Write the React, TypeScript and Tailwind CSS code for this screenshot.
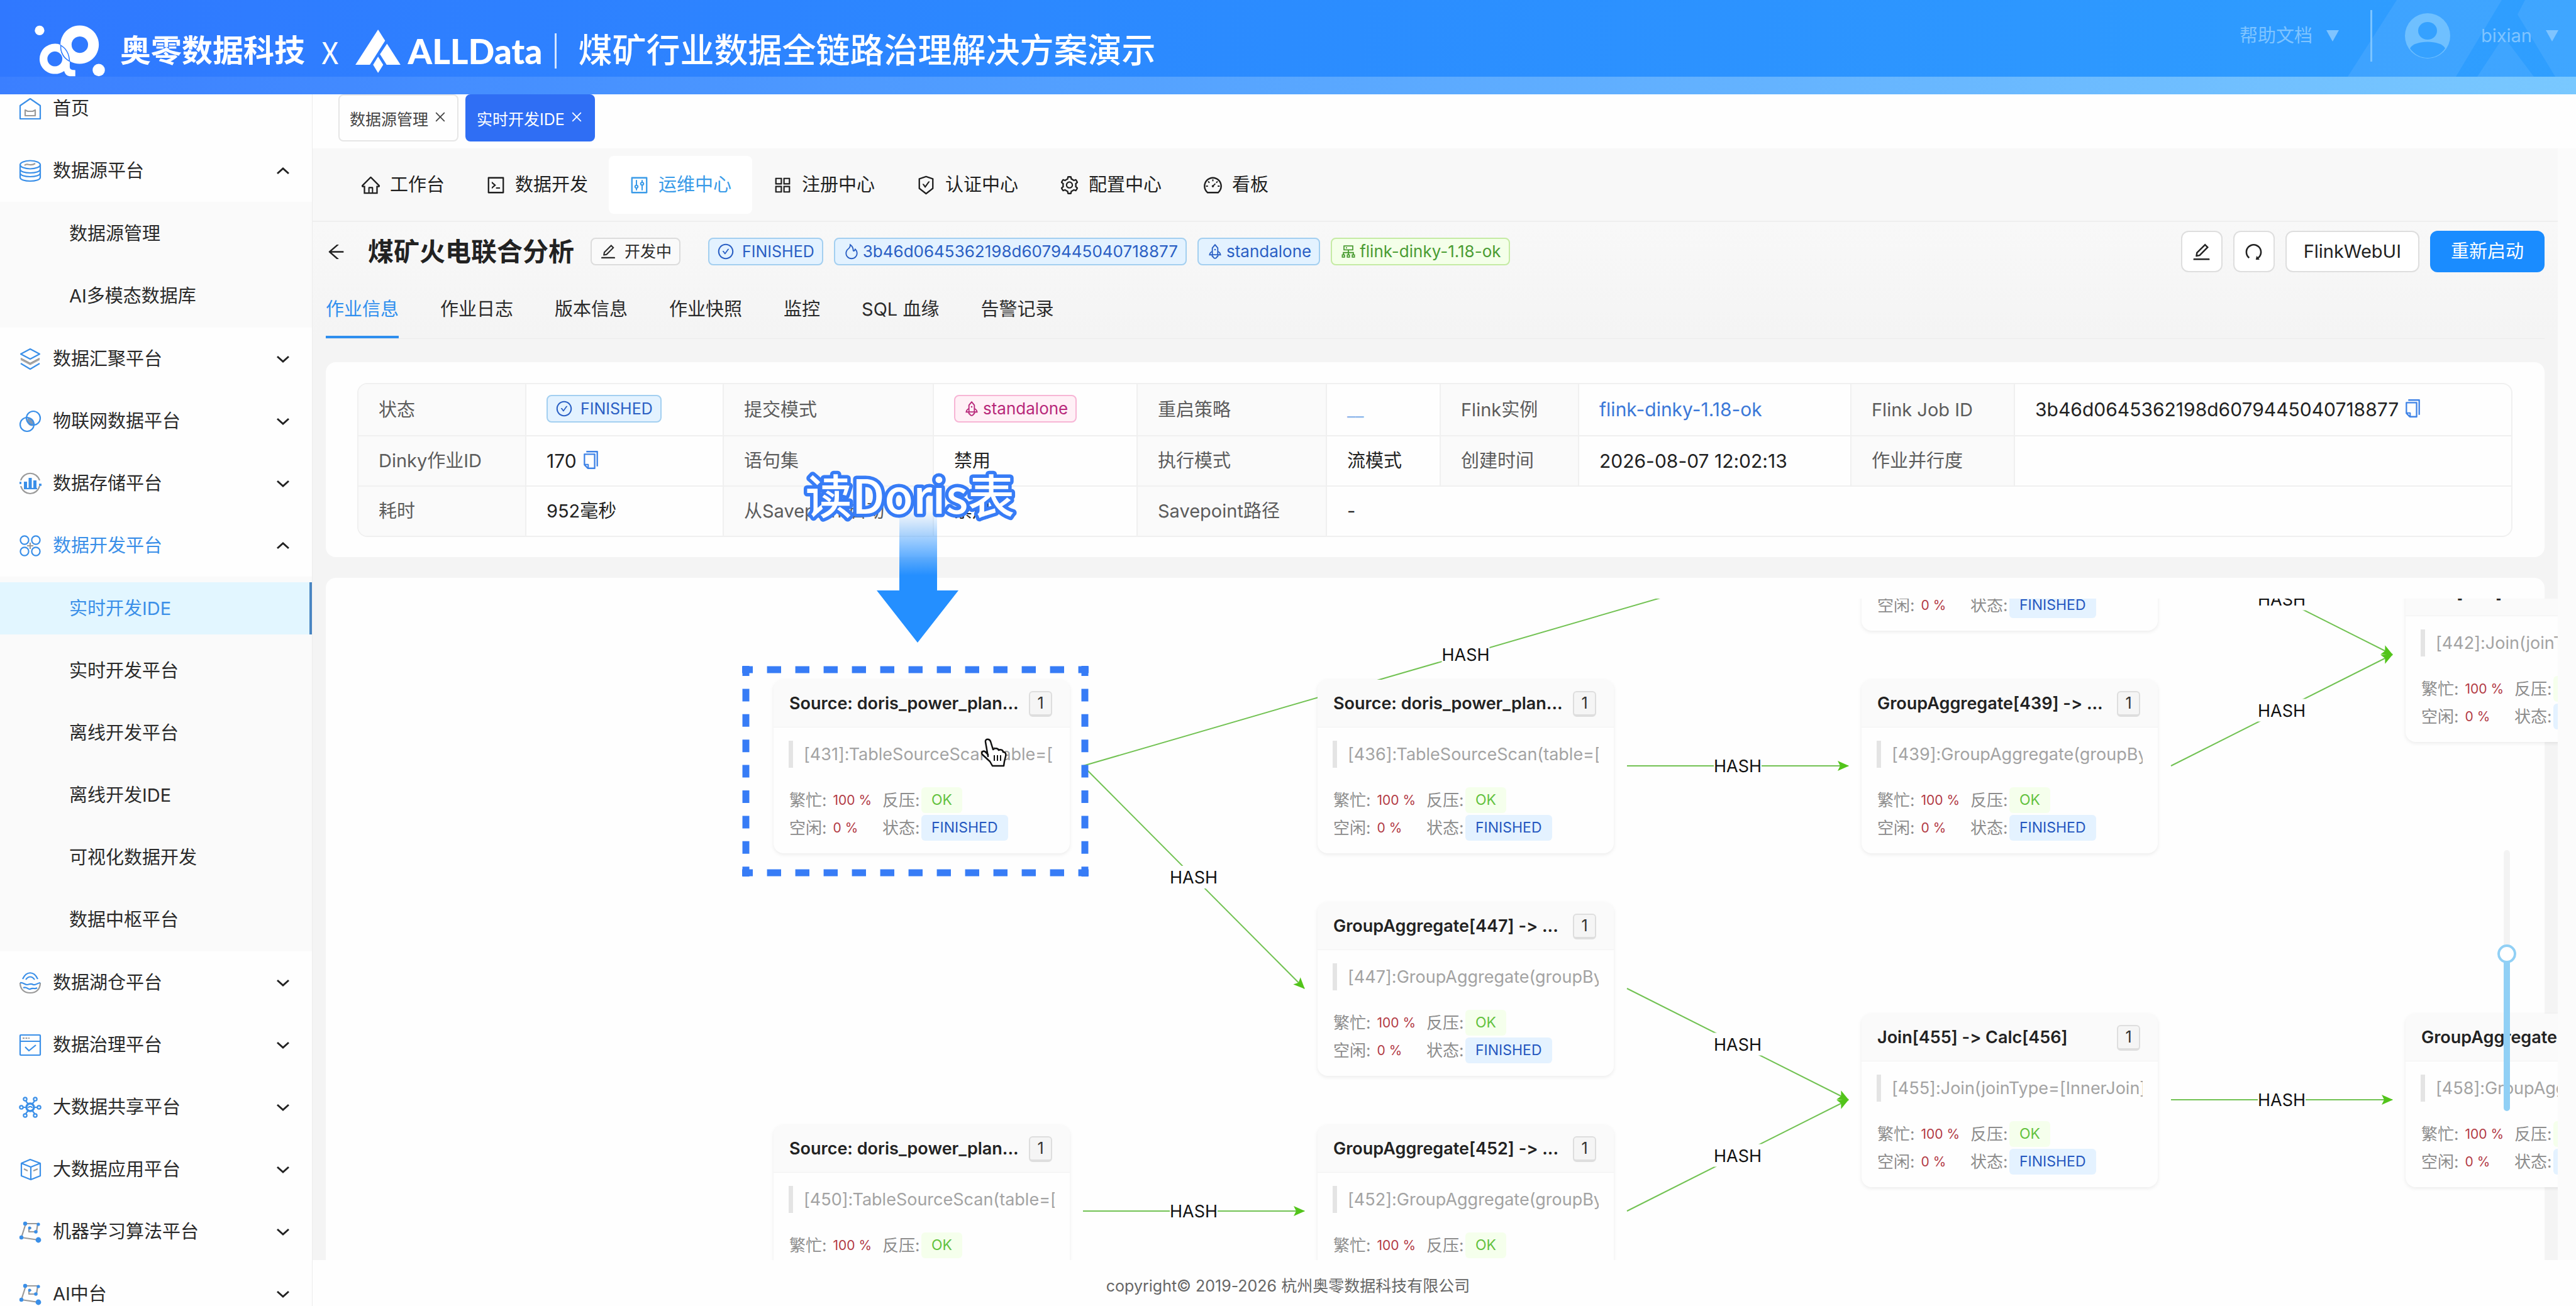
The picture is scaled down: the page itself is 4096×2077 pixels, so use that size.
// App.tsx
import React from 'react';
import {
    AiOutlineAppstore,
    AiOutlineArrowLeft,
    AiOutlineCheckCircle,
    AiOutlineClose,
    AiOutlineCluster,
    AiOutlineCode,
    AiOutlineControl,
    AiOutlineCopy,
    AiOutlineDashboard,
    AiOutlineEdit,
    AiOutlineFire,
    AiOutlineHome,
    AiOutlineRedo,
    AiOutlineRocket,
    AiOutlineSafetyCertificate,
    AiOutlineSetting,
} from 'react-icons/ai';

const BLUE = '#3a8fe8';
const GRAY = '#9a9a9a';

// ---------- sidebar icons ----------

const MenuSvg: React.FC<{ children: React.ReactNode }> = ({ children }) => (
    <svg viewBox="0 0 36 36" className="w-9 h-9 shrink-0" fill="none" stroke={BLUE} strokeWidth="2.2" strokeLinejoin="round">
        {children}
    </svg>
);

const IconHome = () => (
    <MenuSvg>
        <path d="M2 13 L18 2 L34 13 V34 H2 Z" />
        <path d="M10 20 L14 22 H22 L26 20 V29 H10 Z" stroke={GRAY} />
    </MenuSvg>
);
const IconSource = () => (
    <MenuSvg>
        <ellipse cx="18" cy="8" rx="16" ry="6.5" />
        <path d="M2 8 V28 C2 36 34 36 34 28 V8" />
        <path d="M2 15 C2 23 34 23 34 15 M2 21 C2 29 34 29 34 21" />
        <path d="M9 9 C14 4 17 12 26 6" stroke={GRAY} />
    </MenuSvg>
);
const IconLayers = () => (
    <MenuSvg>
        <path d="M18 2 L33 10 L18 18 L3 10 Z" />
        <path d="M3 17 L18 25 L33 17" stroke={GRAY} />
        <path d="M3 19 L18 27 L33 19" stroke={GRAY} strokeWidth="1.2" />
        <path d="M3 25 L18 34 L33 25" />
    </MenuSvg>
);
const IconIot = () => (
    <MenuSvg>
        <path d="M14 13 C20 11 26 17 23 25 C17 27 11 21 14 13 Z" fill="#7d98b8" stroke="none" />
        <circle cx="23" cy="13" r="11" />
        <circle cx="13" cy="23" r="11" />
    </MenuSvg>
);
const IconStorage = () => (
    <MenuSvg>
        <path d="M3 13 C8 -2 28 -2 33 13 M33 22 C28 38 8 38 3 22" stroke={GRAY} />
        <path d="M1 17 H4 M32 20 H36" strokeWidth="3.4" />
        <path d="M8 26 H29" />
        <path d="M8 15 H13 V25 H8 Z M15.500 9 H20.500 V25 H15.500 Z M23 13 H28 V25 H23 Z" fill={BLUE} stroke="none" />
    </MenuSvg>
);
const IconDev = () => (
    <MenuSvg>
        <circle cx="9" cy="9" r="6.600" />
        <circle cx="27" cy="9" r="6.600" />
        <circle cx="9" cy="27" r="6.600" />
        <circle cx="27" cy="27" r="6.600" />
        <path d="M18 13 V23 M13 18 H23" stroke={GRAY} />
    </MenuSvg>
);
const IconLake = () => (
    <MenuSvg>
        <path d="M6 12 C12 -1 24 -1 30 12 M11 13 C15 7 21 7 25 13" />
        <path d="M2 18 C2 28 8 34 18 34 C28 34 34 28 34 18" stroke={GRAY} />
        <path d="M2 18 C7 17 9 21 13 21 C17 21 18 18 23 21 C27 22 30 18 34 18 M7 26 C12 23 14 29 18 28 C23 25 25 29 29 26" />
    </MenuSvg>
);
const IconGovern = () => (
    <MenuSvg>
        <rect x="2" y="2" width="32" height="32" rx="1" />
        <path d="M2 12 H34 M10 21 L16 27 L27 18" />
        <path d="M6 7 H17" stroke={GRAY} strokeDasharray="3 1.5" />
    </MenuSvg>
);
const IconShare = () => (
    <MenuSvg>
        <circle cx="18" cy="18" r="6" strokeWidth="3.400" />
        <circle cx="10" cy="5" r="2.700" />
        <circle cx="26" cy="5" r="2.700" />
        <circle cx="4" cy="18" r="2.700" />
        <circle cx="32" cy="18" r="2.700" />
        <circle cx="10" cy="31" r="2.700" />
        <circle cx="26" cy="31" r="2.700" />
        <path d="M11 8 L15 13 M25 8 L21 13 M7 18 H12 M24 18 H29 M11 28 L15 23 M25 28 L21 23 M15 19 C16 16 20 16 21 19" />
    </MenuSvg>
);
const IconApp = () => (
    <MenuSvg>
        <path d="M18 2 L34 8 V28 L19 34 L4 28 V8 Z M4 8 L19 14 L34 8 M19 14 V34" />
        <path d="M8 17 L14 20 M23 20 L30 17" stroke={GRAY} />
    </MenuSvg>
);
const IconMl = () => (
    <MenuSvg>
        <path d="M4 27 L11 5 H30 L28 18 H16 V12 H20 M4 27 L31 31" stroke={GRAY} />
        <circle cx="10" cy="5" r="3.200" fill={BLUE} stroke="none" />
        <circle cx="31" cy="6" r="2.600" fill={BLUE} stroke="none" />
        <circle cx="27" cy="18" r="2.800" fill={BLUE} stroke="none" />
        <circle cx="17" cy="12" r="2.400" fill={BLUE} stroke="none" />
        <circle cx="4" cy="27" r="3.200" fill={BLUE} stroke="none" />
        <circle cx="31" cy="31" r="4.400" fill={BLUE} stroke="none" />
    </MenuSvg>
);

const Chevron: React.FC<{ open?: boolean }> = ({ open }) => (
    <svg viewBox="0 0 20 12" className="w-5 h-3 ml-auto" fill="none" stroke="#222" strokeWidth="3">
        <path d={open ? 'M1 10 L10 2 L19 10' : 'M1 2 L10 10 L19 2'} />
    </svg>
);

// ---------- sidebar ----------

interface MenuGroup {
    label: string;
    icon: React.FC;
    leaf?: boolean;
    active?: boolean;
    children?: string[];
}

const menu: MenuGroup[] = [
    { label: '首页', icon: IconHome, leaf: true },
    { label: '数据源平台', icon: IconSource, children: ['数据源管理', 'AI多模态数据库'] },
    { label: '数据汇聚平台', icon: IconLayers },
    { label: '物联网数据平台', icon: IconIot },
    { label: '数据存储平台', icon: IconStorage },
    {
        label: '数据开发平台',
        icon: IconDev,
        active: true,
        children: ['实时开发IDE', '实时开发平台', '离线开发平台', '离线开发IDE', '可视化数据开发', '数据中枢平台'],
    },
    { label: '数据湖仓平台', icon: IconLake },
    { label: '数据治理平台', icon: IconGovern },
    { label: '大数据共享平台', icon: IconShare },
    { label: '大数据应用平台', icon: IconApp },
    { label: '机器学习算法平台', icon: IconMl },
    { label: 'AI中台', icon: IconMl },
];

const Sidebar = () => (
    <nav className="w-[497px] shrink-0 border-r border-[#ececec] bg-[#fefefe] overflow-hidden">
        <ul className="-mt-[27px]">
            {menu.map(({ label, icon: Icon, leaf, active, children }) => (
                <li key={label}>
                    <button className="w-full h-[99px] pl-[30px] pr-9 flex items-center text-left">
                        <Icon />
                        <span className={`ml-[18px] ${active ? 'text-[#3a8fe8]' : 'text-[#2a2a2a]'}`}>{label}</span>
                        {!leaf && <Chevron open={!!children} />}
                    </button>
                    {children && (
                        <ul className="py-px bg-[#fafafa]">
                            {children.map((child) => (
                                <li key={child} className="h-[99px] py-2">
                                    <a
                                        href="#"
                                        className={`h-full flex items-center pl-[110px] border-r-4 ${
                                            child === '实时开发IDE'
                                                ? 'bg-[#e2f6ff] text-[#3a8fe8] border-[#4a86c2]'
                                                : 'text-[#2a2a2a] border-transparent'
                                        }`}
                                    >
                                        {child}
                                    </a>
                                </li>
                            ))}
                        </ul>
                    )}
                </li>
            ))}
        </ul>
    </nav>
);

// ---------- header ----------

const Header = () => (
    <header className="relative h-[150px] shrink-0 flex items-center text-white pl-[55px] pt-[12px] bg-gradient-to-r from-[#3078ff] via-[#2b8cff] to-[#2f9fff] overflow-hidden">
        <div className="absolute inset-x-0 bottom-0 h-7 bg-gradient-to-r from-[#3b7fff] via-[#58a6ff] to-[#79c8ff]" />
        <svg viewBox="3733 0 363 122" className="absolute right-0 top-0 w-[363px] h-[122px]" fill="#fff" fillOpacity="0.08">
            <path d="M3811 0 H3978 L3905 122 H3733 Z" />
            <path d="M4015 0 L4003 23 L4063 122 H4096 V0 Z" />
            <path d="M3939 122 L3981 58 L4029 122 Z" />
        </svg>
        <svg viewBox="60 65 370 275" className="relative w-[113px] h-[84px]" fill="#fff">
            <circle cx="86" cy="96" r="25" />
            <circle cx="394" cy="302" r="32" />
            <path fillRule="evenodd" d="M295 70 a100 100 0 1 1 -1 0 Z M295 127 a43 43 0 1 0 1 0 Z" />
            <path
                fillRule="evenodd"
                d="M165 165 C182 165 190 168 197 173 C190 200 205 238 243 256 V286 C244 298 250 302 272 302 V334 H250 C230 334 220 326 214 307 C160 345 86 308 86 244 A79 79 0 0 1 165 165 Z M165 205 a39 39 0 1 0 1 0 Z"
            />
            <path d="M193 172 C220 186 240 212 242 258" fill="none" stroke="#2f7cff" strokeWidth="5" />
            <path d="M197 172 C192 210 212 240 242 256" fill="none" stroke="#2f7cff" strokeWidth="5" />
        </svg>
        <span className="relative ml-[23px] text-[49px] leading-[60px] font-bold">奥零数据科技</span>
        <span className="relative ml-[26px] text-[48px] leading-[60px] font-['Noto_Sans_CJK_SC',sans-serif]">X</span>
        <svg viewBox="233 88 237 228" className="relative ml-[26px] w-[72px] h-[69px]" fill="#fff">
            <path d="M352 88 L389 147 L309 273 H233 Z" />
            <path d="M399 162 L470 273 H397 L362 218 Z" />
            <path d="M352 230 L379 273 L352 316 L326 273 Z" />
        </svg>
        <span className="relative ml-[12px] text-[55px] leading-[60px] font-black font-[Lato,sans-serif]">ALLData</span>
        <span className="relative ml-[20px] w-[3px] h-14 bg-white/80" />
        <h1 className="relative ml-[34px] text-[54px] leading-[60px] font-medium">煤矿行业数据全链路治理解决方案演示</h1>
        <div className="absolute right-[28px] top-0 h-[114px] flex items-center text-[#7fc4ff]">
            <button className="flex items-center gap-[22px]">
                帮助文档
                <svg viewBox="0 0 20 18" className="w-5 h-[18px]" fill="currentColor">
                    <path d="M0 0 H20 L10 18 Z" />
                </svg>
            </button>
            <span className="ml-[50px] w-[3px] h-[82px] bg-[#7cc4ff]" />
            <svg viewBox="0 0 72 72" className="ml-[52px] w-[72px] h-[72px]">
                <circle cx="36" cy="36" r="36" fill="#6fc0ff" />
                <ellipse cx="36" cy="28" rx="15" ry="14" fill="#35a1ff" />
                <path d="M8 56 C14 42 58 42 64 56 C50 76 22 76 8 56 Z" fill="#35a1ff" />
            </svg>
            <button className="ml-[49px] flex items-center gap-[22px]">
                bixian
                <svg viewBox="0 0 20 18" className="w-5 h-[18px]" fill="currentColor">
                    <path d="M0 0 H20 L10 18 Z" />
                </svg>
            </button>
        </div>
    </header>
);

// ---------- top of the work area ----------

const WindowTabs = () => (
    <div className="h-[86px] shrink-0 bg-[#fefefe] pl-[41px] flex items-start gap-[11px] text-[25px]">
        <button className="h-[75px] pt-1 px-4 flex items-center gap-2 rounded-lg border-2 border-[#e6e6e6] text-[#444]">
            数据源管理
            <AiOutlineClose className="w-[22px] h-[22px] mb-2" />
        </button>
        <button className="h-[75px] pt-1 px-[18px] flex items-center gap-2 rounded-lg bg-[#2f6ef4] text-white">
            实时开发IDE
            <AiOutlineClose className="w-[22px] h-[22px] mb-2" />
        </button>
    </div>
);

const navItems = [
    { label: '工作台', icon: AiOutlineHome },
    { label: '数据开发', icon: AiOutlineCode },
    { label: '运维中心', icon: AiOutlineControl },
    { label: '注册中心', icon: AiOutlineAppstore },
    { label: '认证中心', icon: AiOutlineSafetyCertificate },
    { label: '配置中心', icon: AiOutlineSetting },
    { label: '看板', icon: AiOutlineDashboard },
];

const TopNav = () => (
    <nav className="h-[117px] pt-3 pl-[44px] flex border-b-2 border-[#efefef]">
        {navItems.map(({ label, icon: Icon }) => (
            <button
                key={label}
                className={`h-[92px] pl-8 pr-[33px] flex items-center gap-[14px] rounded-lg ${
                    label === '运维中心' ? 'bg-white text-[#3a9be8]' : 'text-[#1f1f1f]'
                }`}
            >
                <Icon className="w-[33px] h-[33px]" />
                {label}
            </button>
        ))}
    </nav>
);

const tagColors = {
    plain: 'bg-[#fafafa] border-[#dcdcdc] text-[#2a2a2a]',
    blue: 'bg-[#e3f2ff] border-[#a3cff0] text-[#2a5fc4]',
    green: 'bg-[#f4ffe9] border-[#c5eba4] text-[#4a9c33]',
    pink: 'bg-[#fff0f6] border-[#f7b5d5] text-[#b8287a]',
};

interface TagProps {
    color: keyof typeof tagColors;
    icon: React.ElementType;
    wide?: boolean;
    children: React.ReactNode;
}

const Tag: React.FC<TagProps> = ({ color, icon: Icon, wide, children }) => (
    <span
        className={`inline-flex items-center h-11 px-3 border-2 rounded-lg leading-[40px] whitespace-nowrap ${
            wide ? 'gap-3 text-[25px]' : 'gap-1 text-[26px]'
        } ${tagColors[color]}`}
    >
        <Icon className="w-7 h-7" />
        {children}
    </span>
);

const TitleBar = () => (
    <div className="h-[93px] pt-px flex items-center">
        <button aria-label="返回">
            <AiOutlineArrowLeft className="w-[33px] h-[33px]" />
        </button>
        <h2 className="ml-[34px] mr-[26px] text-[41px] leading-[60px] font-bold text-[#222]">煤矿火电联合分析</h2>
        <Tag color="plain" icon={AiOutlineEdit} wide>开发中</Tag>
        <div className="ml-[44px] flex gap-[17px]">
            <Tag color="blue" icon={AiOutlineCheckCircle} wide>FINISHED</Tag>
            <Tag color="blue" icon={AiOutlineFire}>3b46d0645362198d6079445040718877</Tag>
            <Tag color="blue" icon={AiOutlineRocket}>standalone</Tag>
            <Tag color="green" icon={AiOutlineCluster}>flink-dinky-1.18-ok</Tag>
        </div>
        <div className="ml-auto flex gap-[17px] text-[#222]">
            <button aria-label="编辑" className="w-[66px] h-[66px] grid place-items-center rounded-xl border-2 border-[#dedede] bg-white">
                <AiOutlineEdit className="w-[33px] h-[33px]" />
            </button>
            <button aria-label="刷新" className="w-[66px] h-[66px] grid place-items-center rounded-xl border-2 border-[#dedede] bg-white">
                <AiOutlineRedo className="w-[33px] h-[33px]" />
            </button>
            <button className="h-[66px] px-[27px] rounded-xl border-2 border-[#dedede] bg-white">FlinkWebUI</button>
            <button className="h-[66px] px-[33px] rounded-xl bg-[#1a8cff] text-white">重新启动</button>
        </div>
    </div>
);

const detailTabs = ['作业信息', '作业日志', '版本信息', '作业快照', '监控', 'SQL 血缘', '告警记录'];

const DetailTabs = () => (
    <div role="tablist" className="h-[93px] flex gap-[66px] border-b border-[#ebebeb]">
        {detailTabs.map((tab, i) => (
            <button
                key={tab}
                role="tab"
                className={`pt-1 border-b-4 ${i === 0 ? 'text-[#2f8fee] border-[#2f8fee]' : 'text-[#2a2a2a] border-transparent'}`}
            >
                {tab}
            </button>
        ))}
    </div>
);

// ---------- job description table ----------

const Label: React.FC<{ children: React.ReactNode }> = ({ children }) => (
    <th scope="row" className="px-8 text-left font-normal text-[#5c5c5c] bg-[#fafafa] border-r-2 border-[#f0f0f0] whitespace-nowrap">
        {children}
    </th>
);

const Value: React.FC<{ span?: number; last?: boolean; children?: React.ReactNode }> = ({ span, last, children }) => (
    <td colSpan={span} className={`px-8 text-[#222] border-[#f0f0f0] whitespace-nowrap ${last ? '' : 'border-r-2'}`}>
        {children}
    </td>
);

const CopyButton = () => (
    <button aria-label="复制" className="ml-1.5 align-[-4px] text-[#3f83e6]">
        <AiOutlineCopy className="w-[33px] h-[33px]" />
    </button>
);

const JobInfo = () => (
    <section className="mt-[37px] pl-[50px] pr-[51px] pt-[33px] pb-8 rounded-2xl bg-[#fefefe]">
        <div className="rounded-2xl border-2 border-[#f0f0f0] overflow-hidden">
            <table className="w-full table-fixed">
                <colgroup>
                    <col className="w-[266px]" />
                    <col className="w-[314px]" />
                    <col className="w-[334px]" />
                    <col className="w-[324px]" />
                    <col className="w-[301px]" />
                    <col className="w-[181px]" />
                    <col className="w-[220px]" />
                    <col className="w-[433px]" />
                    <col className="w-[260px]" />
                    <col />
                </colgroup>
                <tbody>
                    <tr className="h-[82px] border-b-2 border-[#f0f0f0]">
                        <Label>状态</Label>
                        <Value><Tag color="blue" icon={AiOutlineCheckCircle} wide>FINISHED</Tag></Value>
                        <Label>提交模式</Label>
                        <Value><Tag color="pink" icon={AiOutlineRocket}>standalone</Tag></Value>
                        <Label>重启策略</Label>
                        <Value><a href="#" className="text-[#8ab4ea]">__</a></Value>
                        <Label>Flink实例</Label>
                        <Value><a href="#" className="text-[30px] text-[#3b78d8]">flink-dinky-1.18-ok</a></Value>
                        <Label>Flink Job ID</Label>
                        <Value last><span className="text-[30px]">3b46d0645362198d6079445040718877</span><CopyButton /></Value>
                    </tr>
                    <tr className="h-20 border-b-2 border-[#f0f0f0]">
                        <Label>Dinky作业ID</Label>
                        <Value><span className="text-[30px]">170</span><CopyButton /></Value>
                        <Label>语句集</Label>
                        <Value>禁用</Value>
                        <Label>执行模式</Label>
                        <Value>流模式</Value>
                        <Label>创建时间</Label>
                        <Value><span className="text-[30px]">2026-08-07 12:02:13</span></Value>
                        <Label>作业并行度</Label>
                        <Value last />
                    </tr>
                    <tr className="h-[79px]">
                        <Label>耗时</Label>
                        <Value>952毫秒</Value>
                        <Label>从Savepoint启动</Label>
                        <Value>禁用</Value>
                        <Label>Savepoint路径</Label>
                        <Value span={5} last>-</Value>
                    </tr>
                </tbody>
            </table>
        </div>
    </section>
);

// ---------- job graph ----------

const NODE_W = 471;
const PORT_Y = 137;
const PORT_GAP = 21;

interface GraphNode {
    id: string;
    x: number;
    y: number;
    title: string;
    detail: string;
}

const nodes: GraphNode[] = [
    { id: '431', x: 712, y: 129, title: 'Source: doris_power_plan...', detail: '[431]:TableSourceScan(table=[' },
    { id: '450', x: 712, y: 837, title: 'Source: doris_power_plan...', detail: '[450]:TableSourceScan(table=[' },
    { id: '436', x: 1577, y: 129, title: 'Source: doris_power_plan...', detail: '[436]:TableSourceScan(table=[' },
    { id: '447', x: 1577, y: 483, title: 'GroupAggregate[447] -> ...', detail: '[447]:GroupAggregate(groupBy' },
    { id: '452', x: 1577, y: 837, title: 'GroupAggregate[452] -> ...', detail: '[452]:GroupAggregate(groupBy' },
    { id: '433', x: 2442, y: -225, title: 'GroupAggregate[433] -> ...', detail: '[433]:GroupAggregate(groupBy' },
    { id: '439', x: 2442, y: 129, title: 'GroupAggregate[439] -> ...', detail: '[439]:GroupAggregate(groupBy' },
    { id: '455', x: 2442, y: 660, title: 'Join[455] -> Calc[456]', detail: '[455]:Join(joinType=[InnerJoin]' },
    { id: '442', x: 3307, y: -48, title: 'Join[442] -> Calc[443]', detail: '[442]:Join(joinType=[InnerJoin]' },
    { id: '458', x: 3307, y: 660, title: 'GroupAggregate[458] -> ...', detail: '[458]:GroupAggregate(groupBy' },
];

const edges: [string, string][] = [
    ['431', '433'],
    ['431', '447'],
    ['436', '439'],
    ['450', '452'],
    ['433', '442'],
    ['439', '442'],
    ['447', '455'],
    ['452', '455'],
    ['455', '458'],
];

const findNode = (id: string) => nodes.find((n) => n.id === id) as GraphNode;

const Edge: React.FC<{ from: string; to: string }> = ({ from, to }) => {
    const a = findNode(from);
    const b = findNode(to);
    const x1 = a.x + NODE_W + PORT_GAP;
    const y1 = a.y + PORT_Y;
    const x2 = b.x - PORT_GAP;
    const y2 = b.y + PORT_Y;
    const mx = (x1 + x2) / 2;
    const my = (y1 + y2) / 2;
    return (
        <g>
            <line x1={x1} y1={y1} x2={x2} y2={y2} stroke="#72c253" strokeWidth="2" markerEnd="url(#arrow)" />
            <rect x={mx - 38} y={my - 18} width="76" height="36" fill="#fefefe" />
            <text x={mx} y={my + 10} textAnchor="middle" fontSize="27" fill="#111">HASH</text>
        </g>
    );
};

const NodeCard: React.FC<{ node: GraphNode }> = ({ node }) => (
    <article
        className="absolute w-[471px] h-[276px] rounded-2xl bg-[#fefefe] text-[27px] overflow-hidden shadow-[0_2px_6px_rgba(0,0,0,0.08)]"
        style={{ left: node.x, top: node.y }}
    >
        <header className="h-[76px] pt-px pl-[25px] pr-7 flex items-center justify-between bg-[#fafafa] border-b border-[#f2f2f2]">
            <h3 className="font-semibold text-[#222] whitespace-nowrap">{node.title}</h3>
            <span className="w-[37px] h-[41px] grid place-items-center rounded-md border-2 border-b-4 border-[#dedede] bg-[#f5f5f5] text-[25px] leading-[35px] text-[#333]">1</span>
        </header>
        <p className="mt-[21px] mx-6 h-[43px] leading-[43px] border-l-[7px] border-[#e4e4e4] pl-[17px] text-[#a3a3a3] whitespace-nowrap overflow-hidden">
            {node.detail}
        </p>
        <dl className="mt-[31px] pl-[25px] grid grid-cols-[148px_62px_1fr] gap-y-[3px] text-[26px] leading-[41px] text-[#8c8c8c] whitespace-nowrap">
            <div className="flex gap-2.5">
                <dt>繁忙:</dt>
                <dd className="text-[21px] text-[#b33c46]">100 %</dd>
            </div>
            <dt>反压:</dt>
            <dd>
                <span className="inline-block h-[41px] px-4 rounded-md bg-[#f5ffec] text-[23px] text-[#63c23f] align-top">OK</span>
            </dd>
            <div className="flex gap-2.5">
                <dt>空闲:</dt>
                <dd className="text-[21px] text-[#b33c46]">0 %</dd>
            </div>
            <dt>状态:</dt>
            <dd>
                <span className="inline-block h-[41px] px-4 rounded-md bg-[#e4f2ff] text-[23px] text-[#2458c0] align-top">FINISHED</span>
            </dd>
        </dl>
    </article>
);

const JobGraph = () => (
    <section className="mt-[33px] pt-[33px] flex-1 min-h-0 rounded-t-2xl bg-[#fefefe]">
        <div className="relative h-full -mr-[21px] overflow-hidden">
            <svg className="absolute inset-0 w-full h-full">
                <defs>
                    <marker id="arrow" markerUnits="userSpaceOnUse" markerWidth="18" markerHeight="16" refX="17" refY="8" orient="auto">
                        <path d="M0 0 L18 8 L0 16 L4 8 Z" fill="#52c41a" />
                    </marker>
                </defs>
                {edges.map(([from, to]) => (
                    <Edge key={`${from}-${to}`} from={from} to={to} />
                ))}
            </svg>
            {nodes.map((node) => (
                <NodeCard key={node.id} node={node} />
            ))}
            <input
                type="range"
                aria-label="缩放"
                defaultValue={61}
                className="absolute right-[76px] top-[400px] w-[10px] h-[415px] appearance-none rounded-full [writing-mode:vertical-lr] [direction:rtl] bg-[linear-gradient(to_top,#91d0f5_60%,#f3f3f3_60%)] [&::-webkit-slider-thumb]:appearance-none [&::-webkit-slider-thumb]:w-[30px] [&::-webkit-slider-thumb]:h-[30px] [&::-webkit-slider-thumb]:rounded-full [&::-webkit-slider-thumb]:bg-white [&::-webkit-slider-thumb]:border-4 [&::-webkit-slider-thumb]:border-[#91d0f5]"
            />
        </div>
    </section>
);

// ---------- demo callout drawn over the page ----------

const Callout = () => (
    <div className="absolute left-[1170px] top-[730px] w-[580px] h-[680px] pointer-events-none">
        <svg viewBox="1170 730 580 680" className="w-full h-full">
            <defs>
                <linearGradient id="shaft" x1="0" y1="812" x2="0" y2="915" gradientUnits="userSpaceOnUse">
                    <stop offset="0" stopColor="#248fff" stopOpacity="0" />
                    <stop offset="1" stopColor="#248fff" />
                </linearGradient>
            </defs>
            <path d="M1430 812 H1490 V939 H1524 L1459 1022 L1394 939 H1430 Z" fill="url(#shaft)" />
            <text
                x="1447"
                y="817"
                textAnchor="middle"
                fontSize="74"
                fontWeight="500"
                fill="#fff"
                stroke="#377cf6"
                strokeWidth="11"
                strokeLinejoin="round"
                paintOrder="stroke"
                className="font-['Noto_Sans_CJK_SC',sans-serif]"
            >
                读Doris表
            </text>
            <g stroke="#377cf6" strokeWidth="11" fill="none">
                <path d="M1180 1065 H1731 M1180 1388 H1731" strokeDasharray="22.400 22.600" strokeDashoffset="5.400" />
                <path d="M1186 1059 V1394 M1725 1059 V1394" strokeDasharray="20 20.400" strokeDashoffset="4" />
            </g>
            <path
                d="M1571 1203 L1567 1180 C1566 1175 1573 1174 1575 1179 L1579 1192 C1582 1189 1587 1190 1588 1193 C1591 1191 1595 1193 1595 1196 C1599 1196 1600 1199 1599 1203 L1597 1211 L1596 1218 H1578 L1574 1211 L1562 1200 C1559 1196 1564 1193 1567 1196 L1571 1200 Z"
                fill="#fff"
                stroke="#111"
                strokeWidth="2.500"
                strokeLinejoin="round"
            />
            <path d="M1581 1201 V1210 M1586 1201 V1210 M1591 1201 V1210" stroke="#111" strokeWidth="2" />
        </svg>
    </div>
);

const App: React.FC = () => (
    <div className="relative h-screen flex flex-col overflow-hidden bg-[#fefefe] text-[29px] leading-[44px] text-[#222] [font-feature-settings:'calt'_0] [font-family:Inter,'Noto_Sans_CJK_SC',sans-serif]">
        <Header />
        <div className="flex-1 min-h-0 flex">
            <Sidebar />
            <main className="flex-1 min-w-0 flex flex-col bg-[#fbfbfb]">
                <WindowTabs />
                <div className="flex-1 min-h-0 mr-[29px] flex flex-col bg-[linear-gradient(#f8f8f8,#f8f8f8_120px,#f4f4f4_300px)]">
                    <TopNav />
                    <div className="flex-1 min-h-0 px-[21px] flex flex-col">
                        <TitleBar />
                        <DetailTabs />
                        <JobInfo />
                        <JobGraph />
                    </div>
                </div>
                <footer className="h-[73px] shrink-0 pr-[497px] pt-2 grid place-items-center bg-[#fefefe] text-[25px] text-[#666]">
                    copyright© 2019-2026 杭州奥零数据科技有限公司
                </footer>
            </main>
        </div>
        <Callout />
    </div>
);

export default App;
